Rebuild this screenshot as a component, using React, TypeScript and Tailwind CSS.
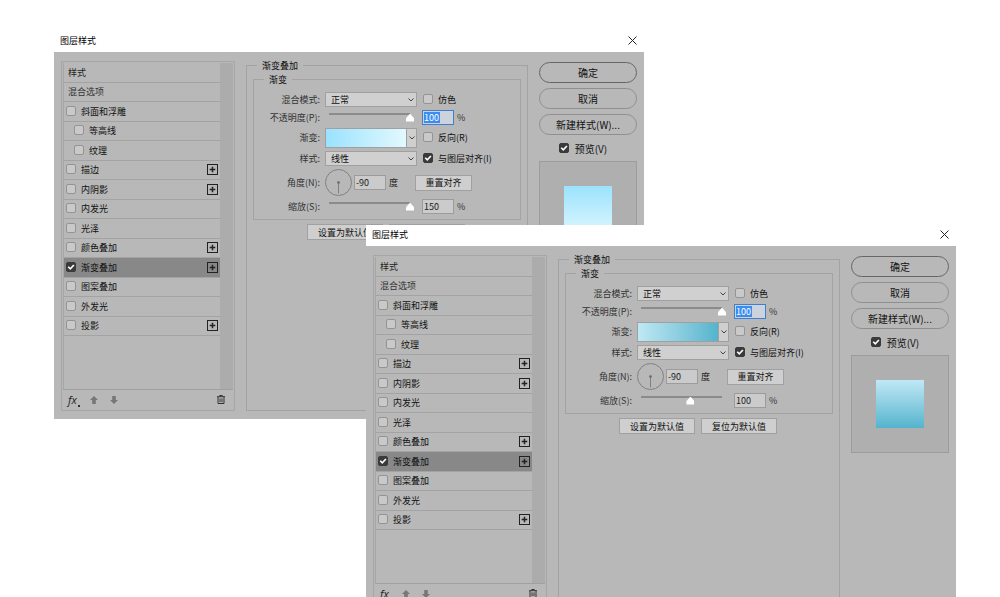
import { useId } from "react";
import type { ReactNode } from "react";
import { clsx } from "clsx";

type Theme = {
  ramp: string;
  preview: string;
  scale: number;
  scalePosition: number;
};

const LIGHT: Theme = {
  ramp: "bg-linear-to-r from-[#99e2ff] to-[#e2f9fd]",
  preview: "bg-linear-to-b from-[#9ae3fc] to-[#dcf6fe]",
  scale: 150,
  scalePosition: 100,
};

const TEAL: Theme = {
  ramp: "bg-linear-to-r from-[#bfe8f4] to-[#53b4cc]",
  preview: "bg-linear-to-b from-[#bfe8f6] to-[#52b4cd]",
  scale: 100,
  scalePosition: 61,
};

type Effect = { name: string; indent?: boolean; plus?: boolean; active?: boolean };

const EFFECTS: Effect[] = [
  { name: "斜面和浮雕" },
  { name: "等高线", indent: true },
  { name: "纹理", indent: true },
  { name: "描边", plus: true },
  { name: "内阴影", plus: true },
  { name: "内发光" },
  { name: "光泽" },
  { name: "颜色叠加", plus: true },
  { name: "渐变叠加", plus: true, active: true },
  { name: "图案叠加" },
  { name: "外发光" },
  { name: "投影", plus: true },
];

function Check({
  label,
  checked,
  className,
}: {
  label: string;
  checked?: boolean;
  className?: string;
}) {
  return (
    <label className={clsx("flex items-center whitespace-nowrap text-[#111]", className)}>
      <span className="mb-px grid size-[10px] shrink-0 place-items-center">
        <input
          type="checkbox"
          defaultChecked={checked}
          className="peer col-start-1 row-start-1 size-[10px] appearance-none rounded-[2px] border border-[#949494] bg-[#c9c9c9] checked:border-[#3a3a3a] checked:bg-[#3a3a3a]"
        />
        <svg
          viewBox="0 0 10 10"
          className="pointer-events-none invisible col-start-1 row-start-1 size-[10px] peer-checked:visible"
          fill="none"
          stroke="#fff"
          strokeWidth="1.6"
        >
          <path d="M2.2 4.8 4.3 6.9 7.9 3" />
        </svg>
      </span>
      <span>{label}</span>
    </label>
  );
}

function Chevron() {
  return (
    <svg viewBox="0 0 6 4" className="h-1 w-1.5" fill="none" stroke="#444" strokeWidth="1">
      <path d="M.5.5 3 3 5.5.5" />
    </svg>
  );
}

function PlusBox() {
  return (
    <svg viewBox="0 0 11 11" className="size-[11px]" fill="none" stroke="#222">
      <rect x=".5" y=".5" width="10" height="10" />
      <path d="M5.5 2.7v5.6M2.7 5.5h5.6" strokeWidth="1.5" />
    </svg>
  );
}

function EffectList() {
  return (
    <section className="flex w-[174px] shrink-0 flex-col border border-[#a6a6a6] p-px">
      <div className="flex flex-1">
        <div className="flex-1 border-l border-[#a6a6a6]">
          <ul className="grid h-[273px] auto-rows-fr">
            <li className="flex items-center border-b border-[#a3a3a3] pl-1 text-[#222]">样式</li>
            <li className="flex items-center border-b border-[#a3a3a3] pl-1 text-[#333]">
              混合选项
            </li>
            {EFFECTS.map((e) => (
              <li
                key={e.name}
                className={clsx(
                  "flex items-center justify-between border-b border-[#a3a3a3] pr-[2px]",
                  e.indent ? "pl-[10px]" : "pl-[2px]",
                  e.active && "bg-[#888]",
                )}
              >
                <Check label={e.name} checked={e.active} className="gap-[5px]" />
                {e.plus && (
                  <button type="button" aria-label={`添加${e.name}`}>
                    <PlusBox />
                  </button>
                )}
              </li>
            ))}
          </ul>
        </div>
        <div className="w-[13px] bg-[#acacac]" />
      </div>
      <div className="flex h-5 items-center border-t border-[#a0a0a0] pr-2 pl-[5px]">
        <button type="button" aria-label="效果" className="flex w-5 items-end">
          <span className="font-['Open_Sans',sans-serif] text-[11px] leading-[14px] text-[#222] italic">
            fx
          </span>
          <span className="ml-px size-[2px] bg-[#333]" />
        </button>
        <button type="button" aria-label="上移" className="ml-[2px]">
          <svg viewBox="0 0 8 8" className="size-2" fill="#777">
            <path d="M4 0 8 4H5.8v4H2.2V4H0z" />
          </svg>
        </button>
        <button type="button" aria-label="下移" className="ml-3">
          <svg viewBox="0 0 8 8" className="size-2" fill="#777">
            <path d="M4 8 8 4H5.8V0H2.2v4H0z" />
          </svg>
        </button>
        <button type="button" aria-label="删除" className="ml-auto">
          <svg viewBox="0 0 8 9" className="h-[9px] w-2" fill="none" stroke="#333">
            <path d="M0 1.7h8M2.7 1.5V.5h2.6v1M1 2v6.5h6V2M3 3.4v3.8M5 3.4v3.8" strokeWidth="1" />
          </svg>
        </button>
      </div>
    </section>
  );
}

function Row({
  label,
  htmlFor,
  height,
  children,
}: {
  label: string;
  htmlFor: string;
  height: string;
  children: ReactNode;
}) {
  return (
    <div className={clsx("flex items-center", height)}>
      <label htmlFor={htmlFor} className="mr-[5px] w-[66px] text-right whitespace-nowrap text-[#333]">
        {label}
      </label>
      {children}
    </div>
  );
}

function Select({ id, value }: { id: string; value: string }) {
  return (
    <span className="grid w-[92px] items-center">
      <select
        id={id}
        defaultValue={value}
        className="col-start-1 row-start-1 h-[15px] w-full appearance-none border border-[#a0a0a0] bg-[#d0d0d0] pl-[5px] text-[#111]"
      >
        <option>{value}</option>
      </select>
      <span className="pointer-events-none col-start-1 row-start-1 mr-[3px] justify-self-end">
        <Chevron />
      </span>
    </span>
  );
}

function Slider({ id, label, position }: { id?: string; label: string; position: number }) {
  return (
    <input
      id={id}
      type="range"
      aria-label={label}
      defaultValue={position}
      className="h-[10px] w-[89px] appearance-none bg-[linear-gradient(#8b8b8b,#8b8b8b)] bg-[length:81px_2px] bg-[position:4px_0] bg-no-repeat [&::-webkit-slider-runnable-track]:h-[10px] [&::-webkit-slider-thumb]:mt-px [&::-webkit-slider-thumb]:size-2 [&::-webkit-slider-thumb]:appearance-none [&::-webkit-slider-thumb]:bg-white [&::-webkit-slider-thumb]:[clip-path:polygon(50%_0,100%_60%,100%_100%,0_100%,0_60%)]"
    />
  );
}

function NumberBox({
  id,
  value,
  label,
  highlighted,
}: {
  id?: string;
  value: number;
  label?: string;
  highlighted?: boolean;
}) {
  return (
    <input
      id={id}
      type="text"
      aria-label={label}
      defaultValue={value}
      className={clsx(
        "h-[15px] w-[32px] border px-px",
        highlighted
          ? "border-[#3f7fd0] bg-[#cdd3dc] bg-[linear-gradient(#3a8cf0,#3a8cf0)] bg-[length:16px_11px] bg-[position:1px_1px] bg-no-repeat text-white"
          : "border-[#9c9c9c] bg-[#cbcbcb] text-[#222]",
      )}
    />
  );
}

function FlatButton({ children, className }: { children: ReactNode; className: string }) {
  return (
    <button
      type="button"
      className={clsx("h-4 border border-[#a0a0a0] bg-[#cfcfcf] text-center text-[#111]", className)}
    >
      {children}
    </button>
  );
}

function GradientOptions({ theme }: { theme: Theme }) {
  const id = useId();
  return (
    <fieldset className="min-w-0 flex-1 border border-[#a3a3a3] px-[6px] pt-[5px]">
      <legend className="ml-1 px-[5px] leading-[9px] text-[#111]">渐变叠加</legend>
      <fieldset className="min-w-0 border border-[#a3a3a3] pt-[7px] pb-[2px]">
        <legend className="ml-[10px] px-[5px] leading-[9px] text-[#111]">渐变</legend>
        <Row label="混合模式:" htmlFor={`${id}mode`} height="h-[17px]">
          <Select id={`${id}mode`} value="正常" />
          <Check label="仿色" className="ml-[6px] gap-[5px]" />
        </Row>
        <Row label="不透明度(P):" htmlFor={`${id}opacity`} height="h-[19px]">
          <Slider label="不透明度" position={100} />
          <span className="ml-2 flex items-center gap-[3px] text-[#333]">
            <NumberBox id={`${id}opacity`} value={100} highlighted />%
          </span>
        </Row>
        <Row label="渐变:" htmlFor={`${id}ramp`} height="h-[21px]">
          <span className="flex h-5 w-[92px] border border-[#a0a0a0]">
            <button
              type="button"
              id={`${id}ramp`}
              aria-label="编辑渐变"
              className={clsx("flex-1", theme.ramp)}
            />
            <button
              type="button"
              aria-label="选择渐变"
              className="grid w-[10px] place-items-center border-l border-[#a0a0a0] bg-[#cfcfcf]"
            >
              <Chevron />
            </button>
          </span>
          <Check label="反向(R)" className="ml-[6px] gap-[5px]" />
        </Row>
        <Row label="样式:" htmlFor={`${id}style`} height="h-[21px]">
          <Select id={`${id}style`} value="线性" />
          <Check label="与图层对齐(I)" checked className="ml-[6px] gap-[5px]" />
        </Row>
        <Row label="角度(N):" htmlFor={`${id}angle`} height="h-[27px]">
          <svg viewBox="0 0 27 27" className="mr-[2px] size-[27px]" fill="none" stroke="#808080">
            <circle cx="13.5" cy="13.5" r="13" />
            <path d="M13.5 13.5v11" />
            <circle cx="13.5" cy="13.5" r="1.3" fill="#666" stroke="none" />
          </svg>
          <NumberBox id={`${id}angle`} value={-90} />
          <span className="ml-[3px] text-[#222]">度</span>
          <FlatButton className="ml-[17px] w-[57px]">重置对齐</FlatButton>
        </Row>
        <Row label="缩放(S):" htmlFor={`${id}scale`} height="h-[21px]">
          <Slider label="缩放" position={theme.scalePosition} />
          <span className="ml-2 flex items-center gap-[3px] text-[#333]">
            <NumberBox id={`${id}scale`} value={theme.scale} />%
          </span>
        </Row>
      </fieldset>
      <div className="mt-1 flex justify-center gap-[6px] pr-[2px]">
        <FlatButton className="w-[76px]">设置为默认值</FlatButton>
        <FlatButton className="w-[76px]">复位为默认值</FlatButton>
      </div>
    </fieldset>
  );
}

function Actions({ theme }: { theme: Theme }) {
  const pill = "h-[21px] rounded-full border text-center";
  return (
    <aside className="flex w-[98px] shrink-0 flex-col pt-px text-[10px] text-[#111]">
      <div className="flex flex-col gap-[5px]">
        <button type="button" className={clsx(pill, "border-[#666]")}>
          确定
        </button>
        <button type="button" className={clsx(pill, "border-[#8f8f8f]")}>
          取消
        </button>
        <button type="button" className={clsx(pill, "border-[#8f8f8f]")}>
          新建样式(W)...
        </button>
      </div>
      <Check label="预览(V)" checked className="h-[26px] justify-center gap-[6px] pr-[10px]" />
      <div className="grid aspect-square place-items-center border border-[#9c9c9c] bg-[#afafaf]">
        <div className={clsx("size-12", theme.preview)} />
      </div>
    </aside>
  );
}

function LayerStyleDialog({ theme, className }: { theme: Theme; className: string }) {
  return (
    <div role="dialog" aria-label="图层样式" className={clsx("absolute w-[590px]", className)}>
      <header className="flex h-[21px] items-center justify-between bg-white pr-[7px] pb-[2px] pl-[6px]">
        <h2 className="text-black">图层样式</h2>
        <button type="button" aria-label="关闭">
          <svg viewBox="0 0 9 9" className="size-[9px]" stroke="#222" strokeWidth="1">
            <path d="M.5.5l8 8M8.5.5l-8 8" />
          </svg>
        </button>
      </header>
      <div className="flex h-[367px] gap-[11px] bg-[#b8b8b8] px-[7px] pt-[9px] pb-2">
        <EffectList />
        <GradientOptions theme={theme} />
        <Actions theme={theme} />
      </div>
    </div>
  );
}

export default function App() {
  return (
    <main
      lang="zh-CN"
      className="relative h-screen overflow-hidden bg-white font-['Noto_Sans_CJK_SC',sans-serif] text-[9px] leading-[13px]"
    >
      <LayerStyleDialog theme={LIGHT} className="top-[31px] left-[54px]" />
      <LayerStyleDialog theme={TEAL} className="top-[225px] left-[366px]" />
    </main>
  );
}
